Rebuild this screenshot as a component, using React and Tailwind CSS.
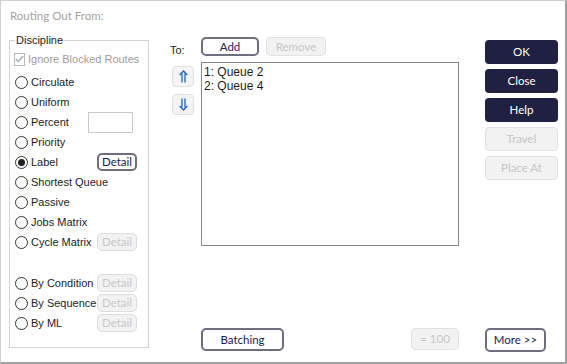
import React from "react";

const F = { fontFamily: '"Liberation Sans", Arial, sans-serif' };
const L = { fontFamily: 'Lato, "Liberation Sans", Arial, sans-serif' };

function Radio({ checked }) {
  return (
    <span className="w-[13px] h-[13px] rounded-full border border-[#333] bg-white flex items-center justify-center shrink-0">
      {checked && <span className="w-[7px] h-[7px] rounded-full bg-[#222]" />}
    </span>
  );
}

function Detail({ enabled }) {
  return enabled ? (
    <div style={L} className="w-[40px] h-[18px] rounded-[5px] border-2 border-[#6e6e80] bg-white flex items-center justify-center text-[11.5px] text-[#1a1a4e] leading-none">
      Detail
    </div>
  ) : (
    <div style={L} className="w-[40px] h-[18px] rounded-[5px] border border-[#dcdcdc] bg-[#f2f2f2] flex items-center justify-center text-[11.5px] text-[#c8c8c8] leading-none">
      Detail
    </div>
  );
}

function Row({ label, checked, right }) {
  return (
    <div className="h-[20px] flex items-center">
      <Radio checked={checked} />
      <span className="ml-[3px] text-[11px] text-[#1c1c1c] leading-none whitespace-nowrap">{label}</span>
      {right && <div className="ml-auto">{right}</div>}
    </div>
  );
}

function DarkBtn({ children }) {
  return (
    <div style={L} className="w-[73px] h-[24px] rounded-[4px] bg-[#1f2042] text-white text-[11.5px] flex items-center justify-center">
      {children}
    </div>
  );
}
function DisBtn({ children, w = "w-[73px]", h = "h-[24px]" }) {
  return (
    <div style={L} className={`${w} ${h} rounded-[4px] border border-[#e2e2e2] bg-[#f2f2f2] text-[#c6c6c6] text-[11.5px] flex items-center justify-center`}>
      {children}
    </div>
  );
}
function OutBtn({ children, w, h }) {
  return (
    <div style={L} className={`${w} ${h} rounded-[5px] border-2 border-[#6e6e80] bg-white text-[#1a1a4e] text-[11.5px] flex items-center justify-center`}>
      {children}
    </div>
  );
}

function ArrowBtn({ up }) {
  return (
    <div className="w-[22px] h-[21px] rounded-[4px] border border-[#e0e0e0] bg-[#f4f4f4] flex items-center justify-center">
      <svg width="9" height="13" viewBox="0 0 9 13" fill="none" stroke="#1f5fbf" strokeWidth="1.3">
        {up ? (
          <>
            <polyline points="0.7,5 4.5,1 8.3,5" />
            <line x1="3" y1="3.5" x2="3" y2="12.5" />
            <line x1="6" y1="3.5" x2="6" y2="12.5" />
          </>
        ) : (
          <>
            <polyline points="0.7,8 4.5,12 8.3,8" />
            <line x1="3" y1="0.5" x2="3" y2="9.5" />
            <line x1="6" y1="0.5" x2="6" y2="9.5" />
          </>
        )}
      </svg>
    </div>
  );
}

export default function App() {
  return (
    <div
      style={F}
      className="w-[567px] h-[364px] bg-white border-t border-l border-[#cfcfcf] border-r-2 border-b-2 border-r-[#a0a0a0] border-b-[#a0a0a0] flex flex-col overflow-hidden"
    >
      <div style={L} className="h-[32px] pt-[7px] pl-[9px] text-[11.5px] leading-[16px] text-[#a3a3a3]">Routing Out From:</div>
      <div className="flex">
        <fieldset className="ml-[8px] w-[140px] min-w-0 h-[315px] border border-[#d4d4d4] pl-[5px] pr-[11px]">
          <legend className="px-[1px] text-[11px] leading-[14px] text-[#1c1c1c]">Discipline</legend>
          <div className="h-[22px] mt-[1px] flex items-center -ml-[1px]">
            <span className="w-[13px] h-[13px] border border-[#b8b8b8] bg-white flex items-center justify-center">
              <svg width="9" height="8" viewBox="0 0 9 8" fill="none" stroke="#a8a8a8" strokeWidth="1.4">
                <polyline points="0.8,4 3.3,6.5 8.2,1" />
              </svg>
            </span>
            <span className="ml-[3px] text-[11px] text-[#9c9c9c] leading-none whitespace-nowrap">Ignore Blocked Routes</span>
          </div>
          <div className="mt-[2px]">
            <Row label="Circulate" />
            <Row label="Uniform" />
            <Row
              label="Percent"
              right={<div className="w-[45px] h-[21px] border border-[#c8c8c8] bg-white mr-[4px]" />}
            />
            <Row label="Priority" />
            <Row label="Label" checked right={<Detail enabled />} />
            <Row label="Shortest Queue" />
            <Row label="Passive" />
            <Row label="Jobs Matrix" />
            <Row label="Cycle Matrix" right={<Detail />} />
            <div className="h-[21px]" />
            <Row label="By Condition" right={<Detail />} />
            <Row label="By Sequence" right={<Detail />} />
            <Row label="By ML" right={<Detail />} />
          </div>
        </fieldset>

        <div className="ml-[21px] flex flex-col">
          <div className="flex">
            <div className="w-[31px] flex flex-col">
              <div className="mt-[10px] h-[14px] text-[11px] leading-[14px] text-[#1c1c1c]">To:</div>
              <div className="mt-[9px] ml-[2px] flex flex-col gap-[7px]">
                <ArrowBtn up />
                <ArrowBtn />
              </div>
            </div>
            <div className="w-[258px] flex flex-col">
              <div className="mt-[4px] flex gap-[7px]">
                <OutBtn w="w-[58px]" h="h-[19px]">Add</OutBtn>
                <DisBtn w="w-[60px]" h="h-[19px]">Remove</DisBtn>
              </div>
              <div className="mt-[6px] w-[258px] h-[184px] border border-[#828790] pl-[2px] pt-[2px] text-[12px] leading-[14px] text-[#1c1c1c]">
                <div>1: Queue 2</div>
                <div>2: Queue 4</div>
              </div>
            </div>
            <div className="ml-[26px] mt-[7px] flex flex-col gap-[5px]">
              <DarkBtn>OK</DarkBtn>
              <DarkBtn>Close</DarkBtn>
              <DarkBtn>Help</DarkBtn>
              <DisBtn>Travel</DisBtn>
              <DisBtn>Place At</DisBtn>
            </div>
          </div>
          <div className="mt-[82px] flex items-start">
            <div className="w-[31px]" />
            <div className="w-[258px] flex justify-between">
              <OutBtn w="w-[83px]" h="h-[23px]">Batching</OutBtn>
              <DisBtn w="w-[48px]" h="h-[22px]">= 100</DisBtn>
            </div>
            <div className="ml-[26px]">
              <OutBtn w="w-[61px]" h="h-[24px]">More &gt;&gt;</OutBtn>
            </div>
          </div>
        </div>
      </div>
    </div>
  );
}
